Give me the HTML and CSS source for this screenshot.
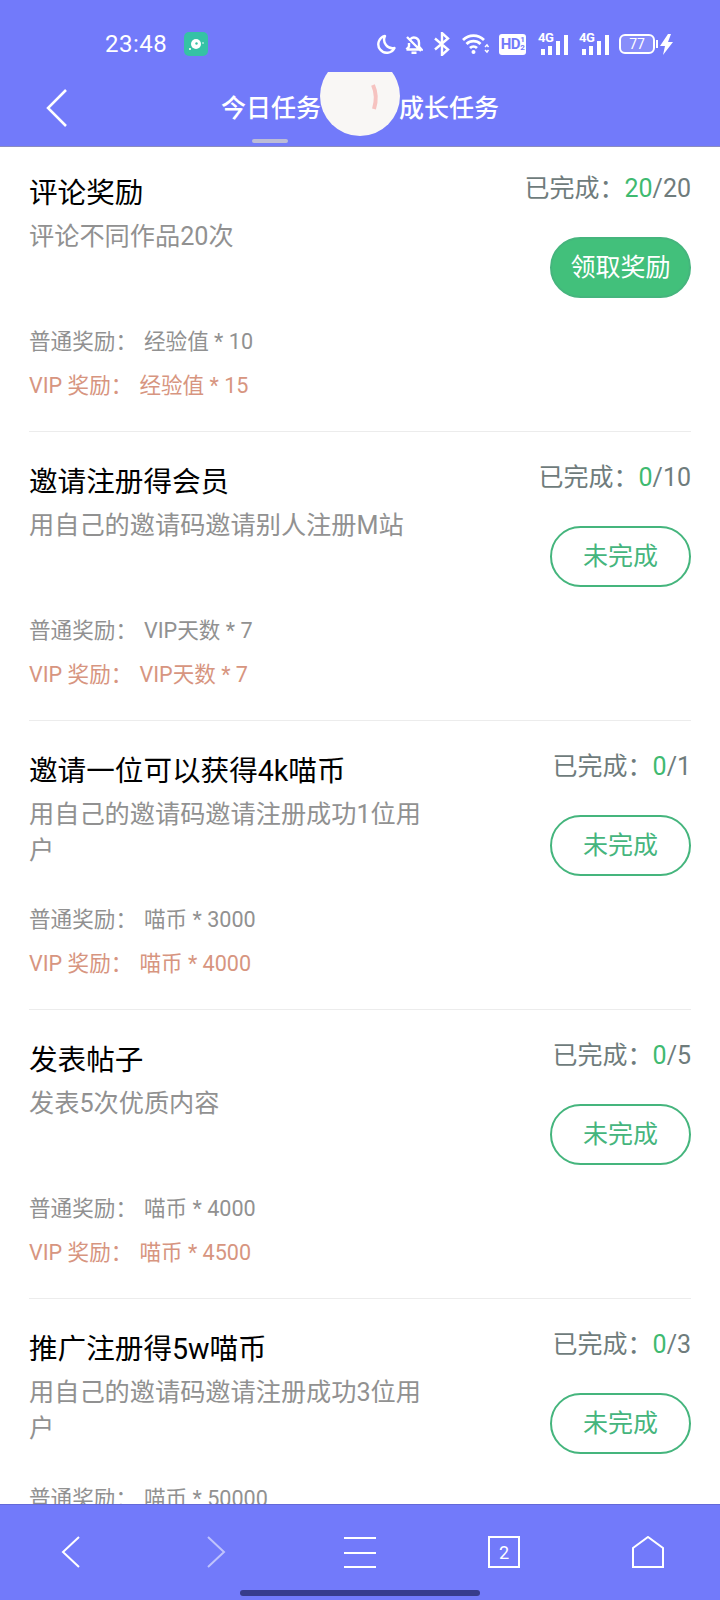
FILE: index.html
```html
<!DOCTYPE html>
<html lang="zh-CN">
<head>
<meta charset="utf-8">
<title>任务中心</title>
<link rel="stylesheet" href="styles.css">
</head>
<body>
<div class="app">
  <header class="top">
    <div class="status">
      <div class="status-left">
        <span class="clock">23:48</span>
        <svg class="app-dot" viewBox="0 0 24 24" width="24" height="24">
          <rect width="24" height="24" rx="5" fill="#35c2a5"/>
          <circle cx="12" cy="12" r="5" fill="#fff"/>
          <circle cx="12.500" cy="11.500" r="1.200" fill="#35c2a5"/>
          <circle cx="6" cy="17" r="1" fill="#fff"/>
          <circle cx="19" cy="11" r="0.800" fill="#fff"/>
        </svg>
      </div>
      <div class="status-right">
        <svg viewBox="0 0 19 20" width="19" height="20" fill="none"><path d="M8 2a8.500 8.500 0 1 0 9.500 12A8.500 8.500 0 0 1 8 2z" stroke="#fff" stroke-width="2.400" stroke-linejoin="round"/></svg>
        <svg class="gap-9" viewBox="0 0 18 20" width="18" height="20" fill="none" stroke="#fff" stroke-width="2.400"><path d="M1.500 15.500h15l-2.500-3V8.500a5 5 0 0 0-8.500-3.500M4 9v3.500l-2.500 3M6.500 18.800h5M2 3l14 14"/></svg>
        <svg class="gap-10" viewBox="0 0 17 24" width="17" height="24" fill="none" stroke="#fff" stroke-width="2.400"><path d="M2 6.500l13 11-6 5.500V1l6 5.500-13 11"/></svg>
        <svg class="gap-12" viewBox="0 0 27 22" width="27" height="22" fill="none" stroke="#fff" stroke-width="2.800"><path d="M1 7a15 15 0 0 1 21 0M4.500 11a10 10 0 0 1 14 0M8 15a5 5 0 0 1 7 0"/><circle cx="11.500" cy="19" r="2" fill="#fff" stroke="none"/><path d="M23 14l2-2 1.500 2M23 17l2 2 1.500-2" stroke-width="1.500"/></svg>
        <div class="hd gap-10"><span>HD</span><small>1<br>2</small></div>
        <div class="signal gap-12">
          <span class="net">4G</span>
          <svg viewBox="0 0 30 21" width="30" height="21" fill="#fff"><rect x="3" y="15" width="4" height="6"/><rect x="10" y="12" width="4" height="9"/><rect x="18" y="7" width="4" height="14"/><rect x="26" y="1" width="4" height="20"/></svg>
        </div>
        <div class="signal gap-11">
          <span class="net">4G</span>
          <svg viewBox="0 0 30 21" width="30" height="21" fill="#fff"><rect x="3" y="15" width="4" height="6"/><rect x="10" y="12" width="4" height="9"/><rect x="18" y="7" width="4" height="14"/><rect x="26" y="1" width="4" height="20"/></svg>
        </div>
        <div class="battery gap-10"><span>77</span></div>
        <svg class="gap-5" viewBox="0 0 14 21" width="14" height="21" fill="#fff"><path d="M8 0L0 12h5l-2 9 10-13H8l3-8z"/></svg>
      </div>
    </div>
    <nav class="nav">
      <svg class="back" viewBox="0 0 22 40" width="22" height="40" fill="none" stroke="#fff" stroke-width="2.500"><path d="M20 2L2 20l18 18"/></svg>
      <div class="tabs">
        <span class="tab tab-on">今日任务</span>
        <span class="tab">成长任务</span>
      </div>
    </nav>
    <div class="spinner">
      <svg viewBox="0 0 80 64" width="80" height="64">
        <path d="M53 13q5 11 1 24" fill="none" stroke="#f6c3c0" stroke-width="4"/>
      </svg>
    </div>
  </header>

  <main class="main">
    <div class="list">
      <section class="card">
        <div class="info">
          <h2 class="title">评论奖励</h2>
          <p class="desc">评论不同作品20次</p>
          <div class="rewards">
            <p class="reward"><span class="rl">普通奖励：</span><span>经验值 * 10</span></p>
            <p class="reward vip"><span class="rl">VIP 奖励：</span><span>经验值 * 15</span></p>
          </div>
        </div>
        <div class="side">
          <p class="progress">已完成：<em>20</em>/20</p>
          <button class="btn btn-fill">领取奖励</button>
        </div>
      </section>
      <section class="card">
        <div class="info">
          <h2 class="title">邀请注册得会员</h2>
          <p class="desc">用自己的邀请码邀请别人注册M站</p>
          <div class="rewards">
            <p class="reward"><span class="rl">普通奖励：</span><span>VIP天数 * 7</span></p>
            <p class="reward vip"><span class="rl">VIP 奖励：</span><span>VIP天数 * 7</span></p>
          </div>
        </div>
        <div class="side">
          <p class="progress">已完成：<em>0</em>/10</p>
          <button class="btn">未完成</button>
        </div>
      </section>
      <section class="card">
        <div class="info">
          <h2 class="title">邀请一位可以获得4k喵币</h2>
          <p class="desc">用自己的邀请码邀请注册成功1位用户</p>
          <div class="rewards">
            <p class="reward"><span class="rl">普通奖励：</span><span>喵币 * 3000</span></p>
            <p class="reward vip"><span class="rl">VIP 奖励：</span><span>喵币 * 4000</span></p>
          </div>
        </div>
        <div class="side">
          <p class="progress">已完成：<em>0</em>/1</p>
          <button class="btn">未完成</button>
        </div>
      </section>
      <section class="card">
        <div class="info">
          <h2 class="title">发表帖子</h2>
          <p class="desc">发表5次优质内容</p>
          <div class="rewards">
            <p class="reward"><span class="rl">普通奖励：</span><span>喵币 * 4000</span></p>
            <p class="reward vip"><span class="rl">VIP 奖励：</span><span>喵币 * 4500</span></p>
          </div>
        </div>
        <div class="side">
          <p class="progress">已完成：<em>0</em>/5</p>
          <button class="btn">未完成</button>
        </div>
      </section>
      <section class="card">
        <div class="info">
          <h2 class="title">推广注册得5w喵币</h2>
          <p class="desc">用自己的邀请码邀请注册成功3位用户</p>
          <div class="rewards rewards-cut">
            <p class="reward"><span class="rl">普通奖励：</span><span>喵币 * 50000</span></p>
          </div>
        </div>
        <div class="side">
          <p class="progress">已完成：<em>0</em>/3</p>
          <button class="btn">未完成</button>
        </div>
      </section>
    </div>
  </main>

  <footer class="bottom">
    <div class="toolbar">
      <svg class="prev" viewBox="0 0 20 34" width="20" height="34" fill="none" stroke="#fff" stroke-width="2"><path d="M18 2L2 17l16 15"/></svg>
      <svg class="dim" viewBox="0 0 20 34" width="20" height="34" fill="none" stroke="#fff" stroke-width="2"><path d="M2 2l16 15L2 32"/></svg>
      <svg viewBox="0 0 32 34" width="32" height="34" fill="none" stroke="#fff" stroke-width="2"><path d="M0 3h32M0 18h32M0 32h32"/></svg>
      <div class="tab-count">2</div>
      <svg viewBox="0 0 32 32" width="32" height="32" fill="none" stroke="#fff" stroke-width="2"><path d="M1 31V12L16 1l15 11v19z"/></svg>
    </div>
    <div class="home-bar"></div>
  </footer>
</div>
</body>
</html>
```

FILE: styles.css
```css
* { box-sizing: border-box; }

html, body {
  margin: 0;
  padding: 0;
}

body {
  font-family: Roboto, "Noto Sans CJK SC", sans-serif;
  background: #fff;
  color: #000;
}

.app {
  position: relative;
  width: 720px;
  height: 1600px;
  display: flex;
  flex-direction: column;
  overflow: hidden;
}

/* Header: system status row and tab navigation */
.top {
  position: relative;
  flex: none;
  height: 147px;
  background: #727afa;
  border-bottom: 1px solid #8b8cc0;
  color: #fff;
}

.status {
  height: 72px;
  padding: 32px 46px 0 105px;
  display: flex;
  justify-content: space-between;
  align-items: flex-start;
}

.status-left {
  display: flex;
  align-items: center;
  gap: 17px;
}

.clock {
  font-size: 24px;
  line-height: 24px;
  letter-spacing: 0.5px;
}

.status-right {
  display: flex;
  align-items: center;
  height: 24px;
}

.gap-5 { margin-left: 5px; }
.gap-9 { margin-left: 9px; }
.gap-10 { margin-left: 10px; }
.gap-11 { margin-left: 11px; }
.gap-12 { margin-left: 12px; }

.hd {
  width: 27px;
  height: 21px;
  border-radius: 3px;
  background: #fff;
  color: #727afa;
  display: flex;
  align-items: center;
  justify-content: center;
  font-size: 15px;
  font-weight: 700;
  line-height: 1;
  letter-spacing: -0.5px;
}

.hd small {
  font-size: 8px;
  line-height: 8px;
}

.signal {
  position: relative;
  width: 30px;
  height: 21px;
}

.net {
  position: absolute;
  left: 0;
  top: -3px;
  font-size: 13px;
  line-height: 13px;
  font-weight: 700;
  letter-spacing: -0.5px;
}

.battery {
  position: relative;
  width: 36px;
  height: 20px;
  border: 2px solid #fff;
  border-radius: 6px;
  display: flex;
  align-items: center;
  justify-content: center;
  font-size: 14px;
  line-height: 1;
  background: rgba(255, 255, 255, 0.15);
}

.battery::after {
  content: "";
  position: absolute;
  right: -5px;
  top: 4px;
  width: 2px;
  height: 8px;
  background: #fff;
}

.nav {
  height: 74px;
  display: grid;
  grid-template-columns: 1fr auto 1fr;
  align-items: center;
}

.back {
  margin-left: 46px;
  margin-top: -2px;
}

.tabs {
  display: flex;
  gap: 78px;
  grid-column: 2;
}

.tab {
  position: relative;
  font-size: 25px;
  line-height: 36px;
  font-weight: 500;
}

.tab-on::after {
  content: "";
  position: absolute;
  left: 31px;
  bottom: -16px;
  width: 36px;
  height: 4px;
  border-radius: 2px;
  background: #bcbcd6;
}

/* Loading disc sitting across the tab row, its top cut off by the status row */
.spinner {
  position: absolute;
  left: 320px;
  top: 72px;
  width: 80px;
  height: 64px;
  overflow: hidden;
}

.spinner::before {
  content: "";
  position: absolute;
  left: 0;
  bottom: 0;
  width: 80px;
  height: 80px;
  border-radius: 50%;
  background: #f9f7f5;
}

.spinner svg {
  position: relative;
  display: block;
}

/* Task list */
.main {
  flex: 1;
  min-height: 0;
  overflow: hidden;
}

.list {
  margin-top: -4px;
  padding: 0 29px;
}

.card {
  height: 289px;
  padding-top: 31px;
  display: flex;
  justify-content: space-between;
  border-bottom: 1px solid #ececec;
}

.card:last-child {
  border-bottom: 0;
}

.info {
  width: 400px;
  display: flex;
  flex-direction: column;
  padding-bottom: 23px;
}

.title {
  margin: 0;
  font-size: 28.6px;
  line-height: 38px;
  font-weight: 400;
  color: #000;
}

.desc {
  margin: 7px 0 0;
  font-size: 25.2px;
  line-height: 35.5px;
  color: #919191;
}

.rewards {
  margin-top: auto;
}

/* The second reward line of the last card is scrolled out of view */
.rewards-cut {
  margin-bottom: 44px;
}

.reward {
  margin: 0;
  display: flex;
  font-size: 21.6px;
  line-height: 44px;
  color: #919191;
}

.rl {
  margin-right: 7px;
}

.vip {
  color: #d79580;
}

.side {
  display: flex;
  flex-direction: column;
  align-items: flex-end;
  margin-top: -3px;
}

.progress {
  margin: 0;
  font-size: 25px;
  line-height: 36px;
  color: #6f7c7c;
}

.progress em {
  font-style: normal;
  color: #3fba70;
}

.btn {
  margin-top: 30px;
  width: 141px;
  height: 61px;
  padding: 0 0 5px;
  border: 2px solid #45b57d;
  border-radius: 31px;
  background: #fff;
  color: #45b57d;
  font: inherit;
  font-size: 25px;
}

.btn-fill {
  background: #42c07b;
  color: #fff;
}

/* Browser toolbar */
.bottom {
  flex: none;
  height: 96px;
  background: #727afa;
  border-top: 1px solid #6469d8;
}

.toolbar {
  height: 80px;
  padding-top: 30px;
  display: grid;
  grid-template-columns: repeat(5, 144px);
  justify-items: center;
  align-items: center;
  align-content: start;
}

.prev {
  margin-left: -3px;
}

.dim {
  opacity: 0.55;
}

.tab-count {
  width: 32px;
  height: 32px;
  border: 2px solid #fff;
  color: #fff;
  font-size: 18px;
  line-height: 30px;
  text-align: center;
}

.home-bar {
  width: 240px;
  height: 6px;
  margin: 5px auto 0;
  border-radius: 3px;
  background: #373c8c;
}
```
